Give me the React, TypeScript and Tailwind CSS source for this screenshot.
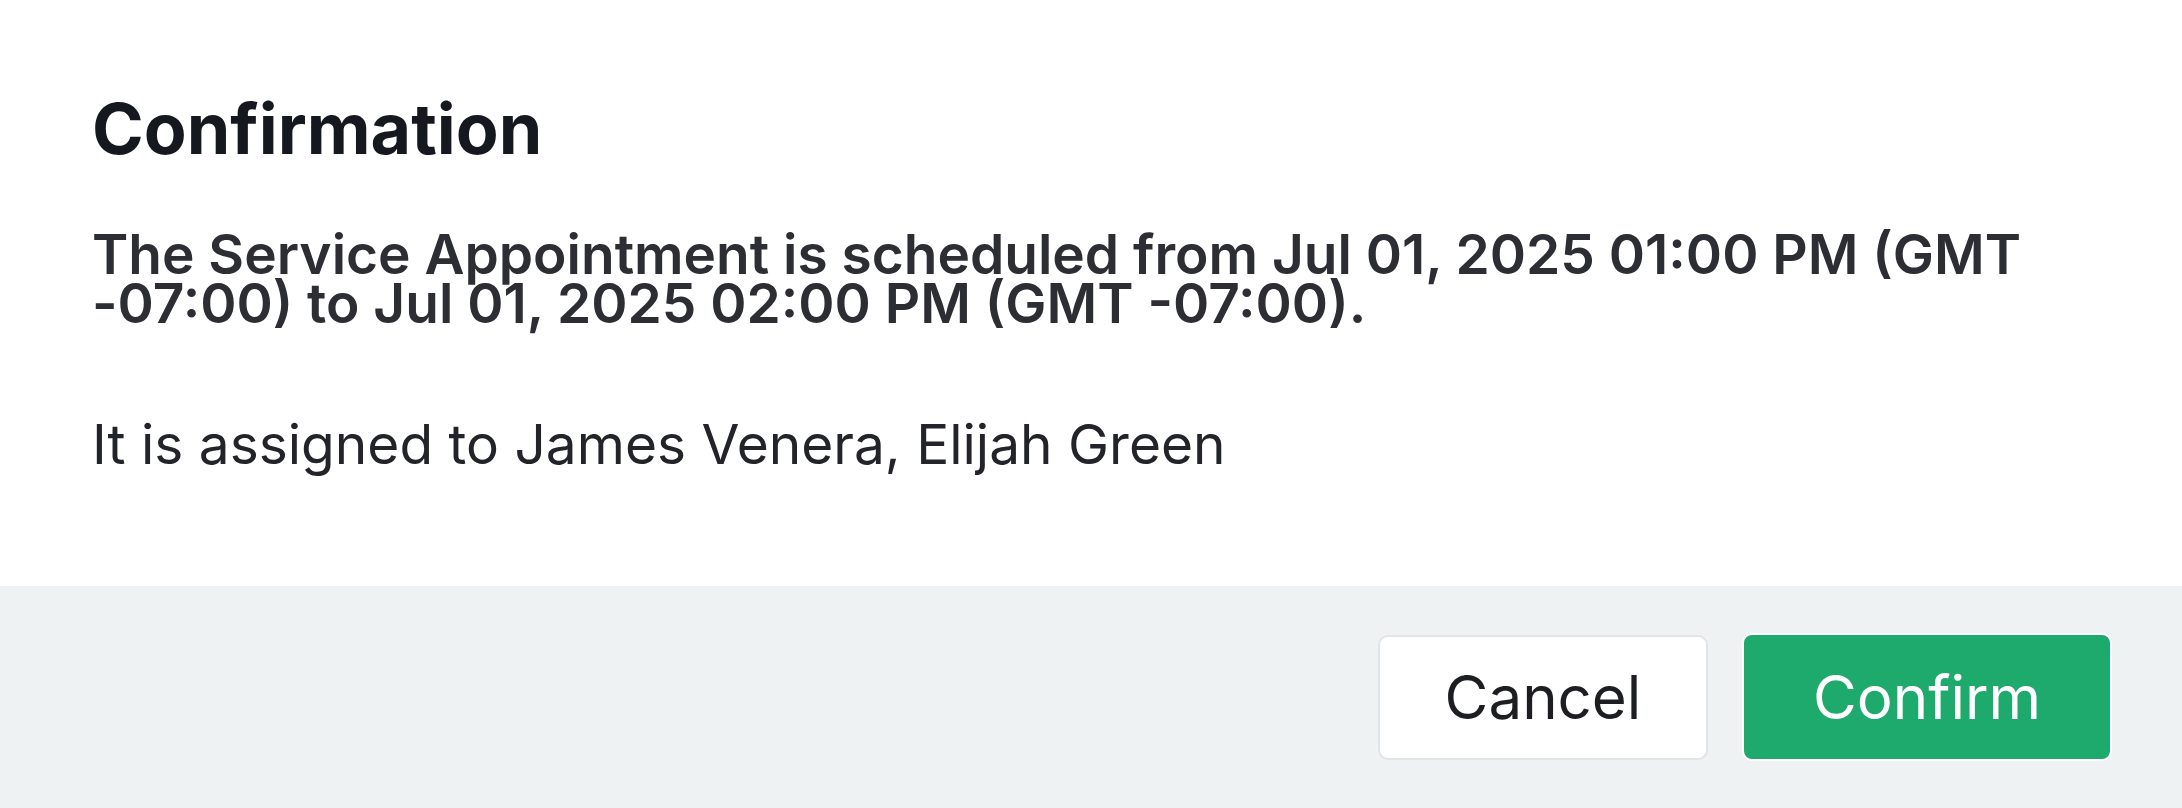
import React from "react";

export default function App() {
  return (
    <div className="h-[808px] w-full flex flex-col bg-white font-['Inter',sans-serif] overflow-hidden">
      <div className="flex-1 pl-[92px] pr-[40px] pt-[89px]">
        <h1 className="text-[70px] leading-[80px] font-bold text-[#15181e]">Confirmation</h1>
        <p className="mt-[61px] text-[55px] leading-[49px] font-semibold text-[#2c2e33]">
          The Service Appointment is scheduled from Jul 01, 2025 01:00 PM (GMT -07:00) to Jul 01, 2025 02:00 PM (GMT -07:00).
        </p>
        <p className="mt-[92px] text-[55px] leading-[49px] text-[#222429]">It is assigned to James Venera, Elijah Green</p>
      </div>
      <div className="h-[222px] bg-[#eef2f3] flex items-center justify-end gap-[34px] pr-[70px]">
        <button className="h-[125px] w-[330px] rounded-[10px] border-2 border-[#e1e4e6] bg-white text-[60px] text-[#1c1e22]">
          Cancel
        </button>
        <button className="h-[128px] w-[370px] rounded-[10px] border-2 border-white bg-[#1eaa6c] text-[60px] text-white">
          Confirm
        </button>
      </div>
    </div>
  );
}
